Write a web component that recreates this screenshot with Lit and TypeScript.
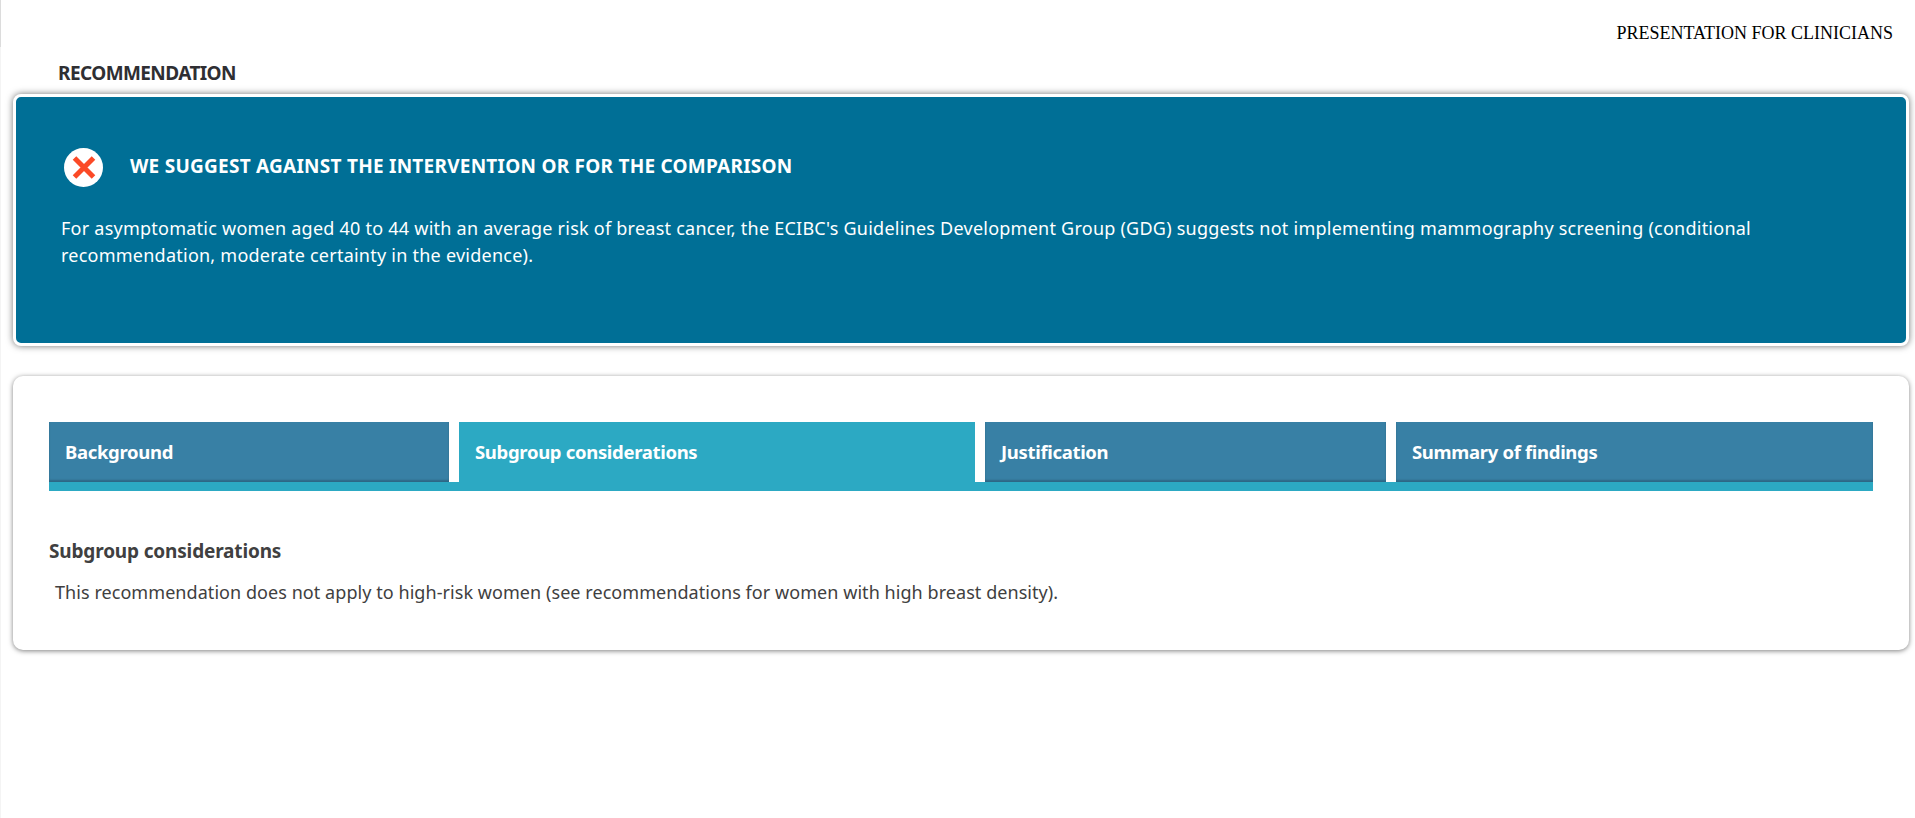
import { LitElement, html, css } from "lit";
import { customElement } from "lit/decorators.js";

@customElement("app-root")
export class AppRoot extends LitElement {
  static styles = css`
    :host { display: block; min-height: 818px; background: #fff; font-family: "Noto Sans", "Lato", sans-serif; color: #333; border-left: 1px solid #f4f4f4; box-sizing: border-box; }
    .top { display: flex; justify-content: flex-end; margin-left: -1px; border-left: 1px solid #dcdcdc; padding: 24px 22px 0 0; height: 23px; font: 18px/18px "Liberation Serif", serif; color: #000; }
    .label { margin: 0; padding: 14px 0 0 57px; font-size: 19px; line-height: 24px; font-weight: 700; color: #2f2f33; height: 33px; box-sizing: content-box; letter-spacing: -.58px; }
    .rec { margin: 0 6px 0 12px; background: #006f96; border: 3px solid #fff; border-radius: 8px; box-shadow: 0 0 7px rgba(0,0,0,.55); color: #fff; padding: 51px 30px 0 45px; box-sizing: content-box; height: 195px; }
    .rec-head { display: flex; align-items: center; gap: 27px; padding-left: 3px; }
    .rec-head svg { display: block; flex: none; }
    .rec-head h2 { margin: -4px 0 0; font-size: 19px; line-height: 26px; font-weight: 700; letter-spacing: .25px; }
    .rec p { margin: 28px 0 0; font-size: 18px; line-height: 27px; letter-spacing: .24px; }
    .card { margin: 30px 6px 0 12px; background: #fff; border-radius: 10px; box-shadow: 0 1px 5px rgba(0,0,0,.5); padding: 46px 36px 0; height: 228px; }
    .tabs { display: grid; grid-template-columns: 400px 516px 401px 477px; column-gap: 10px; border-bottom: 9px solid #2ca9c3; }
    .tab { height: 60px; background: #3880a5; color: #fff; font-size: 18.5px; line-height: 60px; font-weight: 700; letter-spacing: -.32px; padding-left: 16px; box-shadow: inset 0 -2px 2px rgba(0,0,0,.2); }
    .tab.on { background: #2ca9c3; box-shadow: none; }
    h3 { margin: 47px 0 0; font-size: 19px; line-height: 26px; font-weight: 700; letter-spacing: -.16px; color: #404040; }
    .body { margin: 15px 0 0; font-size: 18px; line-height: 26px; letter-spacing: .06px; color: #404040; padding-left: 6px; }
  `;
  render() {
    return html`
      <div class="top">PRESENTATION FOR CLINICIANS</div>
      <div class="label">RECOMMENDATION</div>
      <section class="rec">
        <div class="rec-head">
          <svg width="39" height="39" viewBox="0 0 39 39" aria-hidden="true">
            <circle cx="19.5" cy="19.5" r="19.5" fill="#fff"/>
            <path d="M10.5 10 L29.5 29 M29.5 10 L10.5 29" stroke="#fb4a27" stroke-width="5"/>
          </svg>
          <h2>WE SUGGEST AGAINST THE INTERVENTION OR FOR THE COMPARISON</h2>
        </div>
        <p>For asymptomatic women aged 40 to 44 with an average risk of breast cancer, the ECIBC's Guidelines Development Group (GDG) suggests not implementing mammography screening (conditional recommendation, moderate certainty in the evidence).</p>
      </section>
      <section class="card">
        <div class="tabs">
          <div class="tab">Background</div>
          <div class="tab on">Subgroup considerations</div>
          <div class="tab">Justification</div>
          <div class="tab">Summary of findings</div>
        </div>
        <h3>Subgroup considerations</h3>
        <p class="body">This recommendation does not apply to high-risk women (see recommendations for women with high breast density).</p>
      </section>
    `;
  }
}
